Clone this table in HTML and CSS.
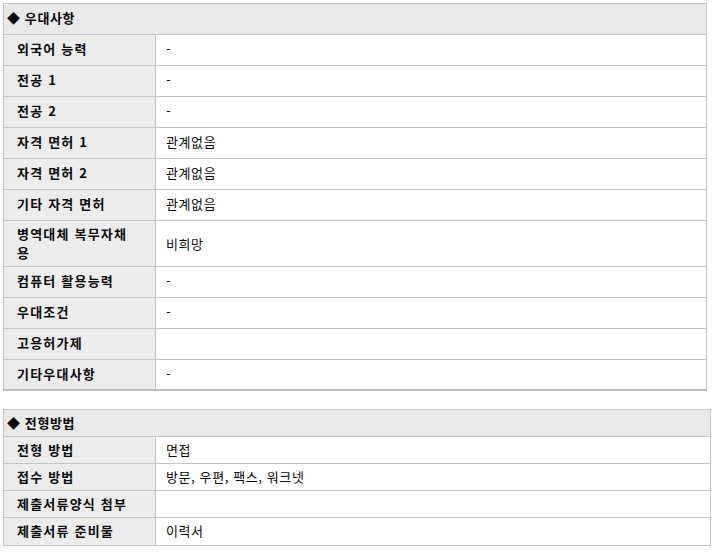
FILE: index.html
```html
<!DOCTYPE html>
<html lang="ko">
<head>
<meta charset="utf-8">
<link rel="stylesheet" href="styles.css">
</head>
<body>
<table class="info info-pref">
  <colgroup><col class="col-label"><col></colgroup>
  <tr><th class="sect" colspan="2">◆ 우대사항</th></tr>
  <tr><th>외국어 능력</th><td>-</td></tr>
  <tr><th>전공 1</th><td>-</td></tr>
  <tr><th>전공 2</th><td>-</td></tr>
  <tr><th>자격 면허 1</th><td>관계없음</td></tr>
  <tr><th>자격 면허 2</th><td>관계없음</td></tr>
  <tr><th>기타 자격 면허</th><td>관계없음</td></tr>
  <tr class="two-line"><th>병역대체 복무자채<br>용</th><td>비희망</td></tr>
  <tr><th>컴퓨터 활용능력</th><td>-</td></tr>
  <tr><th>우대조건</th><td>-</td></tr>
  <tr><th>고용허가제</th><td></td></tr>
  <tr><th>기타우대사항</th><td>-</td></tr>
</table>
<table class="info info-sel">
  <colgroup><col class="col-label"><col></colgroup>
  <tr><th class="sect" colspan="2">◆ 전형방법</th></tr>
  <tr><th>전형 방법</th><td>면접</td></tr>
  <tr><th>접수 방법</th><td>방문, 우편, 팩스, 워크넷</td></tr>
  <tr><th>제출서류양식 첨부</th><td></td></tr>
  <tr><th>제출서류 준비물</th><td>이력서</td></tr>
</table>
</body>
</html>
```
FILE: styles.css
```css
html, body {
  margin: 0;
  padding: 0;
  background: #fff;
}
body {
  padding: 3px 0 0 3px;
  font-family: "Noto Sans CJK KR", "DejaVu Sans", sans-serif;
  font-size: 13px;
  color: #0a0a0a;
}
.info {
  border-collapse: collapse;
  table-layout: fixed;
}
.col-label {
  width: 152px;
}
.info th, .info td {
  border: 1px solid #c4c4c4;
  line-height: 16px;
  text-align: left;
  vertical-align: middle;
  overflow: hidden;
}
.info th {
  background: #ececec;
  font-weight: bold;
  letter-spacing: 1.2px;
  padding-left: 13px;
}
.info td {
  background: #fff;
  font-weight: normal;
  letter-spacing: 0.6px;
  padding-left: 10px;
}
.info th.sect {
  background: #e9e9e9;
  padding-left: 3px;
  letter-spacing: 0.6px;
}
.info-pref {
  width: 704px;
}
.info-pref th, .info-pref td {
  padding-top: 6px;
  padding-bottom: 8px;
}
.info-pref .two-line th, .info-pref .two-line td {
  line-height: 19px;
  padding-top: 3px;
  padding-bottom: 4px;
}
.info-pref tr:last-child th, .info-pref tr:last-child td {
  border-bottom: 2px solid #bdbdbd;
  padding-top: 6px;
  padding-bottom: 7px;
}
.info-sel {
  width: 708px;
  margin-top: 18px;
}
.info-sel th, .info-sel td {
  padding-top: 5px;
  padding-bottom: 5px;
}
.info-sel tr:last-child th, .info-sel tr:last-child td {
  padding-bottom: 6px;
}
```
